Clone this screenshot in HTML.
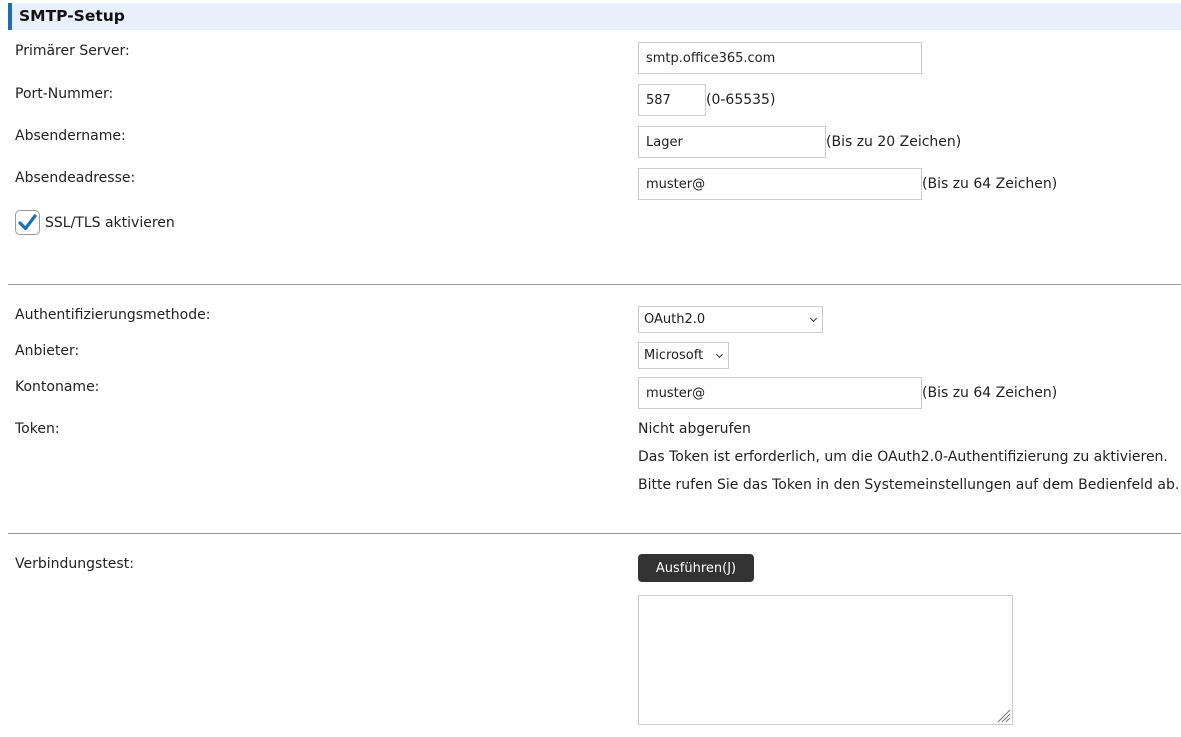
<!DOCTYPE html>
<html><head><meta charset="utf-8"><style>
*{margin:0;padding:0;box-sizing:border-box}
body{width:1181px;height:737px;background:#fff;font-family:"DejaVu Sans","Liberation Sans",sans-serif;font-size:14px;color:#222;position:relative;overflow:hidden}
.a{position:absolute;white-space:nowrap}
.hdr{position:absolute;left:8px;top:3px;width:1173px;height:27px;background:#eaf0fb;border-left:4px solid #1c6db4}
.hdr span{position:absolute;left:7px;top:4px;font-weight:bold;font-size:15.5px;color:#111}
.in{position:absolute;border:1px solid #ccc;background:#fff;font-size:13px;padding-left:7px;display:flex;align-items:center}
.hr{position:absolute;left:8px;width:1173px;height:1px;background:#999}
.chev{position:absolute;right:6px;top:9px;width:5px;height:5px;border-right:1.3px solid #333;border-bottom:1.3px solid #333;transform:rotate(45deg)}
</style></head><body>
<div class="hdr"><span>SMTP-Setup</span></div>
<div class="a" style="left:15px;top:43px">Primärer Server:</div>
<div class="a" style="left:15px;top:86px">Port-Nummer:</div>
<div class="a" style="left:15px;top:128px">Absendername:</div>
<div class="a" style="left:15px;top:170px">Absendeadresse:</div>
<div class="in" style="left:638px;top:42px;width:284px;height:32px">smtp.office365.com</div>
<div class="in" style="left:638px;top:84px;width:68px;height:32px">587</div>
<div class="a" style="left:706px;top:92px">(0-65535)</div>
<div class="in" style="left:638px;top:126px;width:188px;height:32px">Lager</div>
<div class="a" style="left:826px;top:134px">(Bis zu 20 Zeichen)</div>
<div class="in" style="left:638px;top:168px;width:284px;height:32px">muster@</div>
<div class="a" style="left:922px;top:176px">(Bis zu 64 Zeichen)</div>
<div class="a" style="left:15px;top:210px;width:25px;height:25px;border:1px solid #999;border-radius:5px;background:#fff"></div>
<svg class="a" style="left:17px;top:212px" width="21" height="21" viewBox="0 0 21 21"><path d="M3 11 L8.5 16.5 L18 4" fill="none" stroke="#1a6fb8" stroke-width="3.2" stroke-linecap="round" stroke-linejoin="round"/></svg>
<div class="a" style="left:45px;top:215px">SSL/TLS aktivieren</div>
<div class="hr" style="top:284px"></div>
<div class="a" style="left:15px;top:307px">Authentifizierungsmethode:</div>
<div class="a" style="left:15px;top:343px">Anbieter:</div>
<div class="a" style="left:15px;top:379px">Kontoname:</div>
<div class="a" style="left:15px;top:421px">Token:</div>
<div class="in" style="left:638px;top:306px;width:185px;height:27px;padding-left:5px">OAuth2.0<i class="chev"></i></div>
<div class="in" style="left:638px;top:342px;width:91px;height:27px;padding-left:5px">Microsoft<i class="chev"></i></div>
<div class="in" style="left:638px;top:377px;width:284px;height:32px">muster@</div>
<div class="a" style="left:922px;top:385px">(Bis zu 64 Zeichen)</div>
<div class="a" style="left:638px;top:421px">Nicht abgerufen</div>
<div class="a" style="left:638px;top:449px">Das Token ist erforderlich, um die OAuth2.0-Authentifizierung zu aktivieren.</div>
<div class="a" style="left:638px;top:477px">Bitte rufen Sie das Token in den Systemeinstellungen auf dem Bedienfeld ab.</div>
<div class="hr" style="top:533px"></div>
<div class="a" style="left:15px;top:556px">Verbindungstest:</div>
<div class="a" style="left:638px;top:554px;width:116px;height:28px;background:#333;border-radius:4px;color:#fff;font-size:13px;display:flex;align-items:center;justify-content:center">Ausführen(J)</div>
<div class="a" style="left:638px;top:595px;width:375px;height:130px;border:1px solid #ccc"></div>
<svg class="a" style="left:996px;top:708px" width="15" height="15" viewBox="0 0 15 15"><path d="M14 2 L2 14 M14 6 L6 14 M14 10 L10 14" stroke="#777" stroke-width="1"/></svg>
</body></html>
